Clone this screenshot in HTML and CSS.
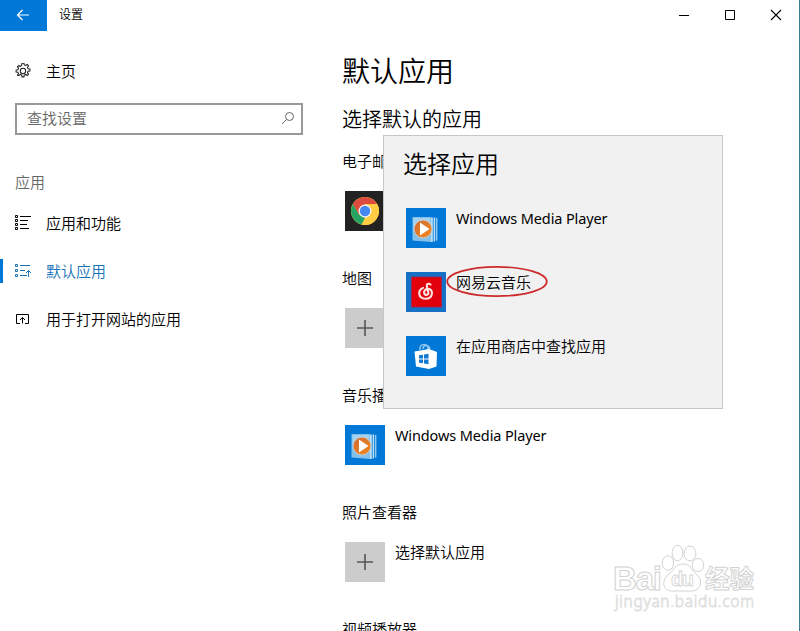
FILE: index.html
```html
<!DOCTYPE html>
<html lang="zh-CN">
<head>
<meta charset="utf-8">
<title>设置</title>
<link rel="stylesheet" href="styles.css">
</head>
<body>
<svg class="defs" width="0" height="0" aria-hidden="true">
  <defs>
    <linearGradient id="disc" x1="0" y1="0" x2="1" y2="1"><stop offset="0" stop-color="#cf6a30"/><stop offset="1" stop-color="#f28a22"/></linearGradient>
    <symbol id="wmp" viewBox="0 0 40 40">
      <path fill="#b9def5" d="M24.500 9.500h2.300v24.500h-2.300zM27.600 9.500h1.600v24h-1.600zM30.200 10h1.100v22.500h-1.100z"/>
      <path fill="#83c0e9" d="M6.500 9H25v25L6.500 32.500z"/>
      <path fill="#a3d2f1" d="M7.500 10H24v9H7.500z"/>
      <circle cx="17" cy="21" r="9" fill="url(#disc)" stroke="#c9d4dc" stroke-width=".9"/>
      <path fill="#fff" d="M14 14.500l9.500 6.500-9.500 6.500z"/>
    </symbol>
    <symbol id="plus" viewBox="0 0 40 40"><path d="M20 12v16M12 20h16" fill="none" stroke="#555" stroke-width="1.600"/></symbol>
  </defs>
</svg>
<div class="window">
  <header class="titlebar">
    <div class="back"><svg width="14" height="12" viewBox="0 0 14 12"><path d="M13 6H1.500M6.500 1l-5 5 5 5" fill="none" stroke="#fff" stroke-width="1.200"/></svg></div>
    <span class="caption">设置</span>
    <div class="controls">
      <svg width="12" height="12" viewBox="0 0 12 12"><path d="M1 6.500h10" stroke="#000"/></svg>
      <svg width="12" height="12" viewBox="0 0 12 12"><path d="M1.500 1.500h9v9h-9z" fill="none" stroke="#000"/></svg>
      <svg width="12" height="12" viewBox="0 0 12 12"><path d="M1 1l10 10M11 1L1 11" stroke="#000" stroke-width="1.100"/></svg>
    </div>
  </header>
  <div class="body">
    <nav class="sidebar">
      <div class="item home">
        <svg class="glyph" viewBox="0.500 0.500 15 15"><g fill="none" stroke="#222" stroke-width="1"><circle cx="8" cy="8" r="2.500"/><path d="M6.800 2.300L7.100.6h1.800l.3 1.700 1.300.55 1.450-1 1.250 1.250-1 1.450.55 1.300 1.700.3v1.800l-1.700.3-.55 1.300 1 1.450-1.250 1.250-1.450-1-1.300.55-.3 1.700H7.100l-.3-1.700-1.300-.55-1.450 1L2.800 12l1-1.450-.55-1.300-1.700-.3v-1.800l1.700-.3.55-1.300-1-1.450 1.250-1.250 1.450 1z"/></g></svg>
        <span>主页</span>
      </div>
      <div class="search"><span>查找设置</span><svg width="14" height="14" viewBox="0 0 14 14"><g fill="none" stroke="#666"><circle cx="8.500" cy="5.500" r="4"/><path d="M5.500 8.500L1 13"/></g></svg></div>
      <div class="group">应用</div>
      <div class="item">
        <svg class="glyph" viewBox="0 0 16 16"><g fill="none" stroke="#000"><path d="M.5.500h2v2h-2zM.5 4.500h2v2h-2zM.5 8.500h2v2h-2zM.5 12.500h2v2h-2zM5 1.500h11M5 5.500h8M5 9.500h7M5 13.500h9"/></g></svg>
        <span>应用和功能</span>
      </div>
      <div class="item active">
        <svg class="glyph" viewBox="0 0 16 16"><g fill="none" stroke="#1672b5"><path d="M.5 1.500h2v2h-2zM.5 6.500h2v2h-2zM.5 11.500h2v2h-2zM5 2.500h10M5 7.500h5M5 12.500h7M13.500 14V7.500M11 10l2.500-2.500L16 10"/></g></svg>
        <span>默认应用</span>
      </div>
      <div class="item">
        <svg class="glyph" viewBox="0 0 16 16"><g fill="none" stroke="#000"><path d="M5 12.500H1.500v-9h12v9H10M7.500 12.500V6.500M5 9l2.500-2.500L10 9"/></g></svg>
        <span>用于打开网站的应用</span>
      </div>
    </nav>
    <main class="content">
      <h1>默认应用</h1>
      <h2>选择默认的应用</h2>
      <section class="app"><h3>电子邮件</h3>
        <div class="row"><svg class="tile dark" viewBox="0 0 40 40"><circle cx="20" cy="20" r="14" fill="#ffd34f"/><path fill="#dd4b3e" d="M20 20L13.900 23.500 7.900 13A14 14 0 0 1 32.100 13H20z"/><path fill="#25a463" d="M7.900 13l6 10.500L20 27l-3.500 6.500A14 14 0 0 1 7.900 13z"/><path fill="#fc4" d="M20 13h12.100a14 14 0 0 1-15.600 20.500L26 23.500z"/><circle cx="20" cy="20" r="6.500" fill="#f4f4f4"/><circle cx="20" cy="20" r="5.200" fill="#4688f1"/></svg></div>
      </section>
      <section class="app"><h3>地图</h3>
        <div class="row"><svg class="tile gray"><use href="#plus"/></svg></div>
      </section>
      <section class="app"><h3>音乐播放器</h3>
        <div class="row"><svg class="tile blue"><use href="#wmp"/></svg><span class="latin">Windows Media Player</span></div>
      </section>
      <section class="app"><h3>照片查看器</h3>
        <div class="row"><svg class="tile gray"><use href="#plus"/></svg><span>选择默认应用</span></div>
      </section>
      <section class="app"><h3>视频播放器</h3></section>
    </main>
  </div>
  <div class="popup">
    <h2>选择应用</h2>
    <div class="row"><svg class="tile blue"><use href="#wmp"/></svg><span class="latin">Windows Media Player</span></div>
    <div class="row"><svg class="tile music" viewBox="0 0 40 40"><path fill="#e1000c" stroke="#9c2450" stroke-width=".8" d="M5.500 5h30v30h-30z"/><path d="M24.500 12.500c-2-1.500-4.200-.3-3.700 1.700l1.500 6c.8 3.200-3.700 3.700-4.200.7-.4-2.600 1.700-4 3.900-4 6 0 5.200 9.800-2.400 9.800-7.700 0-8.200-8.500-2.500-10.800" fill="none" stroke="#ffe2e2" stroke-width="2.100" stroke-linecap="round"/></svg><span class="circled">网易云音乐<svg class="ring" width="102" height="33" viewBox="0 0 102 33"><ellipse cx="51" cy="16.500" rx="49.800" ry="14.600" fill="none" stroke="#cc2b2b" stroke-width="1.700"/></svg></span></div>
    <div class="row"><svg class="tile blue" viewBox="0 0 40 40"><path fill="none" stroke="#8cc7f2" stroke-width="1.500" d="M14 14v-2c0-4 7-5 8 0v2M17 13v-1c1-4 6-3 7 1"/><path fill="#fff" d="M8.500 15.500L23 13l8 3-.5 14.500L23 33l-13-2.500z"/><path fill="#1479d1" d="M13 19.300l4-.6v3.800h-4zM18 18.500l4.500-.7v4.700H18zM13 23.400h4v3.900l-4-.6zM18 23.400h4.500v4.800l-4.500-.7z"/></svg><span>在应用商店中查找应用</span></div>
  </div>
  <svg class="watermark" width="150" height="72" viewBox="0 0 150 72">
    <g fill="#fff" stroke="#d2d2d2" stroke-width="1">
      <text class="mark" x="0" y="46" font-size="33" textLength="49">Bai</text>
      <text class="mark-cn" x="92" y="44" font-size="25" textLength="49" lengthAdjust="spacingAndGlyphs">经验</text>
      <ellipse cx="55" cy="19" rx="5.700" ry="7.200"/><ellipse cx="64.500" cy="9" rx="5.400" ry="7.700"/><ellipse cx="77" cy="9.500" rx="5.900" ry="7.400"/><ellipse cx="85" cy="21" rx="5.800" ry="6.500"/>
      <path d="M70 20c8 0 8 6 14 11 7 6 3 16-5 16H59c-9 0-11-10-4-16 6-5 7-11 15-11z"/>
      <text class="mark thin" x="58" y="42" font-size="20" textLength="23">du</text>
      <text class="url" x="2" y="63" font-size="15.500" textLength="139">jingyan.baidu.com</text>
    </g>
  </svg>
</div>
</body>
</html>
```
FILE: styles.css
```css
* { box-sizing: border-box; }
body {
  margin: 0;
  background: #fff;
  color: #000;
  font: 15px/20px "Noto Sans CJK SC", sans-serif;
  font-weight: 350;
}
h1, h2, h3 { margin: 0; font-weight: inherit; }
svg { display: block; flex: none; }
.defs { position: absolute; }
.window {
  position: relative;
  width: 800px;
  height: 631px;
  overflow: hidden;
  border-right: 1px solid #397f8f;
}
.titlebar { display: flex; height: 31px; align-items: center; }
.back {
  display: flex;
  width: 47px;
  height: 31px;
  align-items: center;
  justify-content: center;
  padding: 0 1px 1px 0;
  background: #0078d7;
}
.caption { margin: -3px 0 0 12px; font-size: 12px; }
.controls { display: flex; gap: 34px; margin-left: auto; padding: 0 17px 2px 0; }
.body { display: flex; }
.sidebar { width: 342px; padding-top: 16px; }
.item { display: flex; height: 48px; align-items: center; padding-left: 15px; gap: 15px; }
.glyph { width: 16px; height: 16px; }
.home { margin-bottom: 8px; }
.active { color: #1672b5; position: relative; }
.active::before {
  content: "";
  position: absolute;
  left: 0;
  top: 12px;
  width: 3px;
  height: 24px;
  background: #0078d7;
}
.search {
  display: flex;
  width: 288px;
  height: 32px;
  align-items: center;
  justify-content: space-between;
  margin: 0 0 37px 15px;
  padding: 0 6px 2px 10px;
  border: 2px solid #999;
  color: #666;
}
.group { height: 27px; padding-left: 15px; color: #666; }
.content { padding-top: 20px; }
.content h1 { font-size: 28px; line-height: 38px; }
.content h2 { margin-top: 16px; font-size: 20px; line-height: 28px; }
.content h3 { font-size: 15px; line-height: 20px; }
.app { height: 117px; }
.content h2 + .app { margin-top: 18px; }
.row { display: flex; gap: 10px; }
.app .row { margin: 20px 0 0 3px; }
.tile { width: 40px; height: 40px; }
.blue { background: #0078d7; }
.music { background: #1670c5; }
.gray { background: #ccc; }
.dark { background: #222; }
.latin { font-family: "Noto Sans", sans-serif; font-weight: 400; font-size: 14.500px; letter-spacing: -0.12px; white-space: nowrap; }
.popup {
  position: absolute;
  left: 383px;
  top: 135px;
  width: 340px;
  height: 274px;
  padding: 10px 0 0 22px;
  background: #f1f1f1;
  border: 1px solid #c6c6c6;
}
.popup h2 { margin: 0 0 28px -3px; font-size: 24px; line-height: 34px; }
.popup .row { height: 64px; }
.circled { position: relative; height: 20px; }
.ring { position: absolute; left: -10px; top: -7px; }
.watermark { position: absolute; left: 613px; top: 544px; }
.mark { font-family: "Liberation Sans", sans-serif; font-weight: 700; }
.thin { stroke-width: 0.8px; }
.mark-cn { font-family: "Noto Sans CJK SC", sans-serif; font-weight: 700; }
.url { font-family: "Noto Sans", sans-serif; stroke: #dedede; stroke-width: 0.8px; }
```
